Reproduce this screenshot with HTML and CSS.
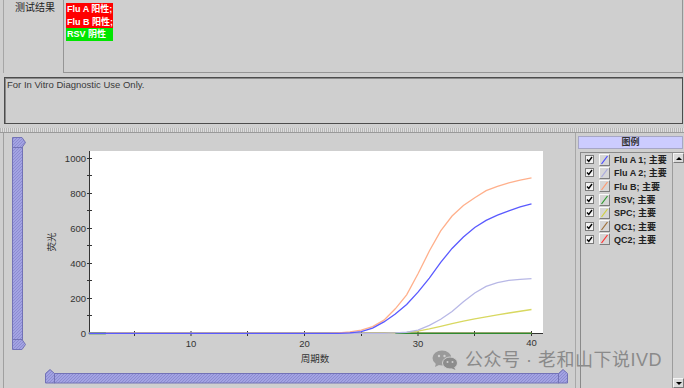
FILE: index.html
```html
<!DOCTYPE html>
<html lang="zh">
<head>
<meta charset="utf-8">
<title>测试结果</title>
<link rel="stylesheet" href="styles.css">
</head>
<body>
<div class="app">
  <div class="top">
    <div class="top-label">测试结果</div>
    <div class="results">
      <div class="res pos">Flu A 阳性;</div>
      <div class="res pos">Flu B 阳性;</div>
      <div class="res neg">RSV 阴性</div>
    </div>
  </div>
  <div class="notice">For In Vitro Diagnostic Use Only.</div>
  <div class="splitter"></div>
  <div class="bottom">
    <div class="plotpane">
      <div class="vslider">
        <svg width="14" height="214" viewBox="0 0 14 214">
          <defs>
            <pattern id="hatchv" width="3" height="3" patternUnits="userSpaceOnUse">
              <rect width="3" height="3" fill="#a3a3e3"/>
              <path d="M0 3 L3 0" stroke="#8686cc" stroke-width="0.8"/>
            </pattern>
          </defs>
          <rect x="0.5" y="10.5" width="10" height="192" fill="url(#hatchv)" stroke="#7272b6"/>
          <polygon points="0.5,0.5 10,0.5 13.5,5.5 10,10.5 0.5,10.5" fill="url(#hatchv)" stroke="#7272b6"/>
          <polygon points="0.5,202.5 10,202.5 13.5,207.5 10,212.5 0.5,212.5" fill="url(#hatchv)" stroke="#7272b6"/>
        </svg>
      </div>
      <svg class="chart" width="540" height="235" viewBox="30 133 540 235">
        <rect x="90" y="151" width="453" height="182" fill="#ffffff"/>
        <g stroke="#333" stroke-width="1">
          <line x1="89.5" y1="151" x2="89.5" y2="334"/>
          <line x1="89" y1="333.5" x2="543" y2="333.5"/>
          <line x1="87" y1="158.5" x2="92" y2="158.5"/>
          <line x1="87" y1="175.5" x2="92" y2="175.5"/>
          <line x1="87" y1="193.5" x2="92" y2="193.5"/>
          <line x1="87" y1="210.5" x2="92" y2="210.5"/>
          <line x1="87" y1="228.5" x2="92" y2="228.5"/>
          <line x1="87" y1="245.5" x2="92" y2="245.5"/>
          <line x1="87" y1="263.5" x2="92" y2="263.5"/>
          <line x1="87" y1="280.5" x2="92" y2="280.5"/>
          <line x1="87" y1="298.5" x2="92" y2="298.5"/>
          <line x1="87" y1="315.5" x2="92" y2="315.5"/>
          <line x1="134.5" y1="331" x2="134.5" y2="336"/>
          <line x1="191" y1="331" x2="191" y2="336"/>
          <line x1="247.5" y1="331" x2="247.5" y2="336"/>
          <line x1="304.5" y1="331" x2="304.5" y2="336"/>
          <line x1="361.5" y1="331" x2="361.5" y2="336"/>
          <line x1="418" y1="331" x2="418" y2="336"/>
          <line x1="474.5" y1="331" x2="474.5" y2="336"/>
          <line x1="531.5" y1="331" x2="531.5" y2="336"/>
        </g>
        <g class="tick-text" text-anchor="end">
          <text x="86" y="161.8">1000</text>
          <text x="86" y="196.8">800</text>
          <text x="86" y="231.8">600</text>
          <text x="86" y="266.8">400</text>
          <text x="86" y="301.8">200</text>
          <text x="86" y="336.8">0</text>
        </g>
        <g class="tick-text" text-anchor="middle">
          <text x="191" y="346.5">10</text>
          <text x="304.5" y="346.5">20</text>
          <text x="418" y="346.5">30</text>
          <text x="531.5" y="346">40</text>
        </g>
        <text class="axis-title" x="315" y="362" text-anchor="middle">周期数</text>
        <text class="axis-title" transform="translate(55 242) rotate(-90)" text-anchor="middle">荧光</text>
        <g transform="translate(88.85 333.3) scale(11.35 -0.175)" fill="none" stroke-width="1.3">
          <polyline vector-effect="non-scaling-stroke" stroke="#ff3030" points="0,0 39,0"/>
          <polyline vector-effect="non-scaling-stroke" stroke="#a0703a" points="0,0 39,0"/>
          <polyline vector-effect="non-scaling-stroke" stroke="#2f9a2f" points="0,0 39,0"/>
          <polyline vector-effect="non-scaling-stroke" stroke="#d8d860" points="0,0 27,0 28,5 29,13 30,25 31,40 32,55 33,70 34,82 35,94 36,105 37,116 38,126 39,136"/>
          <polyline vector-effect="non-scaling-stroke" stroke="#2f8a2f" stroke-width="2" points="0,0 1.5,0"/>
          <polyline vector-effect="non-scaling-stroke" stroke="#2f8a2f" points="27,0 39,0"/>
          <polyline vector-effect="non-scaling-stroke" stroke="#b8b8e6" points="0,0 26,0 27,2 28,6 29,18 30,45 31,80 32,125 33,180 34,230 35,268 36,290 37,302 38,308 39,312"/>
          <polyline vector-effect="non-scaling-stroke" stroke="#ffb08c" points="0,0 21,0 22,3 23,8 24,18 25,38 26,75 27,140 28,220 29,340 30,470 31,585 32,670 33,730 34,775 35,815 36,840 37,860 38,875 39,888"/>
          <polyline vector-effect="non-scaling-stroke" stroke="#5a5aff" points="0,0 22,0 23,3 24,10 25,30 26,65 27,110 28,165 29,235 30,315 31,405 32,485 33,550 34,605 35,645 36,675 37,700 38,722 39,740"/>
        </g>
      </svg>
      <div class="hslider">
        <svg width="524" height="15" viewBox="0 0 524 15">
          <defs>
            <pattern id="hatchh" width="3" height="3" patternUnits="userSpaceOnUse">
              <rect width="3" height="3" fill="#a3a3e3"/>
              <path d="M0 3 L3 0" stroke="#8686cc" stroke-width="0.8"/>
            </pattern>
          </defs>
          <rect x="9.5" y="4.5" width="504" height="9.5" fill="url(#hatchh)" stroke="#7272b6"/>
          <polygon points="0.5,4.5 5,0.5 9.5,4.5 9.5,14 0.5,14" fill="url(#hatchh)" stroke="#7272b6"/>
          <polygon points="513.5,4.5 518,0.5 522.5,4.5 522.5,14 513.5,14" fill="url(#hatchh)" stroke="#7272b6"/>
        </svg>
      </div>
    </div>
    <div class="legend">
      <div class="legend-title">图例</div>
      <div class="legend-box">
        <div class="legend-list">
          <div class="row"><span class="check"><svg width="7" height="7" viewBox="0 0 7 7"><polyline points="1,3.5 2.8,5.5 6,1" fill="none" stroke="#000" stroke-width="1.4"/></svg></span><span class="swatch"><svg width="9" height="10" viewBox="0 0 9 10"><line x1="1.5" y1="9" x2="7.5" y2="1" stroke="#4a4aff" stroke-width="1.2"/></svg></span><span class="name">Flu A 1; 主要</span></div>
          <div class="row"><span class="check"><svg width="7" height="7" viewBox="0 0 7 7"><polyline points="1,3.5 2.8,5.5 6,1" fill="none" stroke="#000" stroke-width="1.4"/></svg></span><span class="swatch"><svg width="9" height="10" viewBox="0 0 9 10"><line x1="1.5" y1="9" x2="7.5" y2="1" stroke="#aaaadd" stroke-width="1.2"/></svg></span><span class="name">Flu A 2; 主要</span></div>
          <div class="row"><span class="check"><svg width="7" height="7" viewBox="0 0 7 7"><polyline points="1,3.5 2.8,5.5 6,1" fill="none" stroke="#000" stroke-width="1.4"/></svg></span><span class="swatch"><svg width="9" height="10" viewBox="0 0 9 10"><line x1="1.5" y1="9" x2="7.5" y2="1" stroke="#ff9a70" stroke-width="1.2"/></svg></span><span class="name">Flu B; 主要</span></div>
          <div class="row"><span class="check"><svg width="7" height="7" viewBox="0 0 7 7"><polyline points="1,3.5 2.8,5.5 6,1" fill="none" stroke="#000" stroke-width="1.4"/></svg></span><span class="swatch"><svg width="9" height="10" viewBox="0 0 9 10"><line x1="1.5" y1="9" x2="7.5" y2="1" stroke="#2f9a2f" stroke-width="1.2"/></svg></span><span class="name">RSV; 主要</span></div>
          <div class="row"><span class="check"><svg width="7" height="7" viewBox="0 0 7 7"><polyline points="1,3.5 2.8,5.5 6,1" fill="none" stroke="#000" stroke-width="1.4"/></svg></span><span class="swatch"><svg width="9" height="10" viewBox="0 0 9 10"><line x1="1.5" y1="9" x2="7.5" y2="1" stroke="#d0d040" stroke-width="1.2"/></svg></span><span class="name">SPC; 主要</span></div>
          <div class="row"><span class="check"><svg width="7" height="7" viewBox="0 0 7 7"><polyline points="1,3.5 2.8,5.5 6,1" fill="none" stroke="#000" stroke-width="1.4"/></svg></span><span class="swatch"><svg width="9" height="10" viewBox="0 0 9 10"><line x1="1.5" y1="9" x2="7.5" y2="1" stroke="#a0703a" stroke-width="1.2"/></svg></span><span class="name">QC1; 主要</span></div>
          <div class="row"><span class="check"><svg width="7" height="7" viewBox="0 0 7 7"><polyline points="1,3.5 2.8,5.5 6,1" fill="none" stroke="#000" stroke-width="1.4"/></svg></span><span class="swatch"><svg width="9" height="10" viewBox="0 0 9 10"><line x1="1.5" y1="9" x2="7.5" y2="1" stroke="#ff3030" stroke-width="1.2"/></svg></span><span class="name">QC2; 主要</span></div>
        </div>
        <div class="scrollbar">
          <div class="arrow up"></div>
          <div class="arrow down"></div>
        </div>
      </div>
    </div>
  </div>
  <div class="watermark">
    <svg width="26" height="20" viewBox="0 0 26 20">
      <ellipse cx="10" cy="8" rx="9.5" ry="7.5" fill="#9a9a9a"/>
      <path d="M4 13 L3 17 L8 14.5 Z" fill="#9a9a9a"/>
      <ellipse cx="18" cy="13" rx="7.5" ry="6" fill="#8c8c8c" stroke="#cfcfcf" stroke-width="1"/>
      <path d="M22 17 L23.5 20 L19 18 Z" fill="#8c8c8c"/>
      <circle cx="7" cy="6" r="1.2" fill="#cfcfcf"/>
      <circle cx="12.5" cy="6" r="1.2" fill="#cfcfcf"/>
      <circle cx="15.5" cy="12" r="1" fill="#cfcfcf"/>
      <circle cx="20.5" cy="12" r="1" fill="#cfcfcf"/>
    </svg>
    <span class="wm-text">公众号 · 老和山下说IVD</span>
  </div>
</div>
</body>
</html>
```
FILE: styles.css
```css
* { box-sizing: border-box; }
html, body { margin: 0; padding: 0; }
body {
  width: 684px;
  height: 388px;
  overflow: hidden;
  background: #cfcfcf;
  font-family: "Liberation Sans", "Noto Sans CJK SC", sans-serif;
  color: #222;
}
.app { position: relative; width: 684px; height: 388px; }

.top {
  display: flex;
  height: 73px;
  margin-left: 3px;
  border-left: 1px solid #a6a6a6;
}
.top-label {
  width: 59px;
  padding: 2px 0 0 11px;
  font-size: 10px;
  line-height: 12px;
  color: #222;
}
.results {
  flex: 1;
  height: 74px;
  margin: -1px 1px 0 0;
  border: 1px solid #959595;
  padding: 3px 2px;
}
.res {
  width: 47px;
  height: 12.5px;
  line-height: 12.5px;
  padding-left: 1px;
  font-size: 9px;
  font-weight: bold;
  color: #fff;
  white-space: nowrap;
}
.pos { background: #ff0000; }
.neg { background: #00e600; }

.notice {
  height: 47px;
  margin: 4px 1px 0 4px;
  border: 1px solid #4c4c4c;
  box-shadow: inset 1px 1px 0 #8a8a8a;
  padding: 1px 2px;
  font-size: 9.5px;
  line-height: 12px;
  color: #3a3a3a;
}

.splitter {
  height: 5px;
  margin-top: 4px;
  border-bottom: 1px solid #9a9a9a;
  background: repeating-linear-gradient(90deg, #b6b6b6 0 1px, #dedede 1px 2px);
}

.bottom {
  display: flex;
  height: 255px;
  margin-left: 3px;
  border-left: 1px solid #a0a0a0;
}
.plotpane {
  width: 571px;
  display: grid;
  grid-template-columns: 26px 540px;
  grid-template-rows: 235px 20px;
}
.vslider { padding: 4px 0 0 8px; }
.vslider svg, .hslider svg, .chart { display: block; }
.hslider { grid-column: 1 / 3; padding: 1px 0 0 41px; }

.tick-text {
  font-family: "Liberation Sans", sans-serif;
  font-size: 9.5px;
  fill: #333;
}
.axis-title {
  font-family: "Noto Sans CJK SC", sans-serif;
  font-size: 9.5px;
  fill: #333;
}

.legend {
  width: 109px;
  border-left: 1px solid #a8a8a8;
  display: flex;
  flex-direction: column;
}
.legend-title {
  height: 13px;
  margin: 3px 1px 0 2px;
  border: 1px solid #a6a6c6;
  background: #ccccff;
  text-align: center;
  font-size: 9px;
  font-weight: bold;
  line-height: 11px;
  color: #333;
}
.legend-box {
  flex: 1;
  margin: 3px 0 0 4px;
  display: flex;
  border-left: 1px solid #8a8a8a;
  border-top: 1px solid #8a8a8a;
}
.legend-list { flex: 1; }
.row {
  height: 13.3px;
  display: flex;
  align-items: center;
  padding-left: 4px;
}
.check {
  width: 9px;
  height: 9px;
  border: 1px solid #7a7a7a;
  background: #f2f2f2;
  display: flex;
  align-items: center;
  justify-content: center;
}
.check svg, .swatch svg { display: block; }
.swatch {
  width: 11px;
  height: 12px;
  margin-left: 5px;
  border: 1px solid;
  border-color: #fafafa #7c7c7c #7c7c7c #fafafa;
  background: #d6d6d6;
}
.name {
  margin-left: 4px;
  font-size: 9px;
  font-weight: bold;
  color: #222;
  white-space: nowrap;
}
.scrollbar {
  width: 12px;
  border-left: 1px solid #9c9c9c;
  display: flex;
  flex-direction: column;
  justify-content: space-between;
}
.arrow {
  height: 10px;
  background: #dadada;
  border: 1px solid;
  border-color: #f4f4f4 #7a7a7a #7a7a7a #f4f4f4;
  display: flex;
  align-items: center;
  justify-content: center;
}
.arrow::before {
  content: "";
  border-left: 3px solid transparent;
  border-right: 3px solid transparent;
}
.up::before { border-bottom: 3px solid #000; }
.down::before { border-top: 3px solid #000; }

.watermark {
  position: absolute;
  left: 432px;
  top: 350px;
  display: flex;
  align-items: center;
  gap: 7px;
}
.watermark svg { display: block; }
.wm-text {
  font-family: "Liberation Sans", "Noto Sans CJK SC", sans-serif;
  font-size: 18px;
  line-height: 19px;
  letter-spacing: 0.5px;
  color: #8a8a8a;
}
```
